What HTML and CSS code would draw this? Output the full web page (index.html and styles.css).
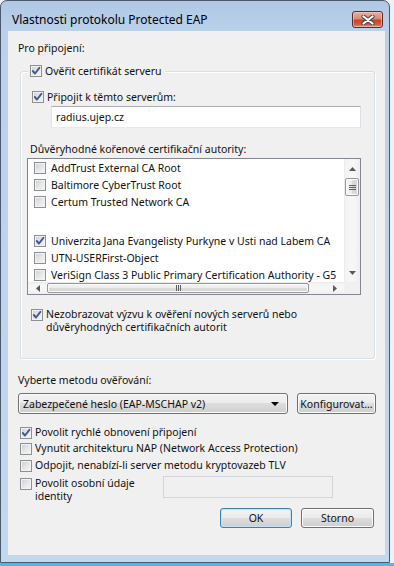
FILE: index.html
```html
<!DOCTYPE html>
<html lang="cs">
<head>
<meta charset="utf-8">
<title>Vlastnosti protokolu Protected EAP</title>
<link rel="stylesheet" href="styles.css">
</head>
<body>
<div class="window">
  <div class="titlebar">
    <span class="title">Vlastnosti protokolu Protected EAP</span>
    <span class="close"><svg width="14" height="10" viewBox="0 0 14 10"><path d="M2.5 1.5 L11.5 8.5 M11.5 1.5 L2.5 8.5" stroke="#4a4a4a" stroke-width="4.2" stroke-linecap="round" fill="none"/><path d="M2.5 1.5 L11.5 8.5 M11.5 1.5 L2.5 8.5" stroke="#ffffff" stroke-width="2.2" stroke-linecap="round" fill="none"/></svg></span>
  </div>
  <div class="client">
    <div class="lbl top">Pro připojení:</div>
    <div class="group">
      <div class="legend"><span class="cb on"><svg viewBox="0 0 10 10"><path d="M1.8 5 L4 7.5 L8.4 1.8" /></svg></span><span>Ověřit certifikát serveru</span></div>
      <div class="row connect"><span class="cb on"><svg viewBox="0 0 10 10"><path d="M1.8 5 L4 7.5 L8.4 1.8" /></svg></span><span>Připojit k těmto serverům:</span></div>
      <div class="edit">radius.ujep.cz</div>
      <div class="lbl ca">Důvěryhodné kořenové certifikační autority:</div>
      <div class="listbox">
        <div class="items">
          <div class="item"><span class="cb"></span><span>AddTrust External CA Root</span></div>
          <div class="item"><span class="cb"></span><span>Baltimore CyberTrust Root</span></div>
          <div class="item"><span class="cb"></span><span>Certum Trusted Network CA</span></div>
          <div class="spacer"></div>
          <div class="item"><span class="cb on"><svg viewBox="0 0 10 10"><path d="M1.8 5 L4 7.5 L8.4 1.8" /></svg></span><span>Univerzita Jana Evangelisty Purkyne v Usti nad Labem CA</span></div>
          <div class="item"><span class="cb"></span><span>UTN-USERFirst-Object</span></div>
          <div class="item"><span class="cb"></span><span>VeriSign Class 3 Public Primary Certification Authority - G5</span></div>
        </div>
        <div class="vscroll">
          <div class="sarrow"><svg width="7" height="4" viewBox="0 0 7 4"><path d="M0 4 L3.5 0 L7 4 Z" fill="#5a5a5a"/></svg></div>
          <div class="vthumb"><svg width="7" height="5" viewBox="0 0 7 5"><path d="M0 0.5 H7 M0 2.5 H7 M0 4.5 H7" stroke="#5e5e5e" stroke-width="1"/></svg></div>
          <div class="sfill"></div>
          <div class="sarrow"><svg width="7" height="4" viewBox="0 0 7 4"><path d="M0 0 L3.5 4 L7 0 Z" fill="#5a5a5a"/></svg></div>
        </div>
        <div class="hscroll">
          <div class="harrow"><svg width="4" height="7" viewBox="0 0 4 7"><path d="M4 0 L0 3.5 L4 7 Z" fill="#5a5a5a"/></svg></div>
          <div class="hthumb"><svg width="5" height="6" viewBox="0 0 5 6"><path d="M0.5 0 V6 M2.5 0 V6 M4.5 0 V6" stroke="#5e5e5e" stroke-width="1"/></svg></div>
          <div class="sfill"></div>
          <div class="harrow"><svg width="4" height="7" viewBox="0 0 4 7"><path d="M0 0 L4 3.5 L0 7 Z" fill="#5a5a5a"/></svg></div>
        </div>
        <div class="corner"></div>
      </div>
      <div class="row prompt"><span class="cb on"><svg viewBox="0 0 10 10"><path d="M1.8 5 L4 7.5 L8.4 1.8" /></svg></span><span>Nezobrazovat výzvu k ověření nových serverů nebo<br>důvěryhodných certifikačních autorit</span></div>
    </div>
    <div class="lbl method">Vyberte metodu ověřování:</div>
    <div class="combo-row">
      <div class="combo"><span>Zabezpečené heslo (EAP-MSCHAP v2)</span><svg width="8" height="4" viewBox="0 0 8 4"><path d="M0 0 H8 L4 4 Z" fill="#000"/></svg></div>
      <div class="btn konf">Konfigurovat...</div>
    </div>
    <div class="opt o1"><span class="cb on"><svg viewBox="0 0 10 10"><path d="M1.8 5 L4 7.5 L8.4 1.8" /></svg></span><span>Povolit rychlé obnovení připojení</span></div>
    <div class="opt o2"><span class="cb"></span><span>Vynutit architekturu NAP (Network Access Protection)</span></div>
    <div class="opt o3"><span class="cb"></span><span>Odpojit, nenabízí-li server metodu kryptovazeb TLV</span></div>
    <div class="opt o4"><span class="cb"></span><span class="idlabel">Povolit osobní údaje<br>identity</span><div class="field"></div></div>
    <div class="buttons">
      <div class="btn ok">OK</div>
      <div class="btn storno">Storno</div>
    </div>
  </div>
</div>
</body>
</html>
```

FILE: styles.css
```css
* { box-sizing: border-box; }
html, body { margin: 0; padding: 0; }
body {
  width: 394px;
  height: 566px;
  overflow: hidden;
  background: linear-gradient(to bottom, #eef1f4 0, #eef1f4 563px, #36c4ee 563px);
  font-family: "Noto Sans", "Open Sans", sans-serif;
  font-size: 10.5px;
  color: #111;
}
.window {
  width: 390px;
  height: 563px;
  border: 1px solid #4a5a6c;
  border-radius: 7px 7px 0 0;
  background: linear-gradient(to bottom, #b0c8e4 0, #bad1ea 30px, #c2d8ef 100%);
  padding: 0 4px 7px 7px;
  display: flex;
  flex-direction: column;
}
.titlebar {
  height: 30px;
  flex: none;
  display: flex;
  align-items: flex-start;
  padding: 10px 2px 0 4px;
}
.title {
  flex: 1;
  font-size: 12px;
  line-height: 17px;
  color: #000;
}
.close {
  width: 31px;
  height: 17px;
  border: 1px solid #5c2a22;
  border-radius: 3px;
  background: linear-gradient(to bottom, #eab1a2 0, #d98a74 45%, #c2442b 55%, #cf5f45 85%, #e29a80 100%);
  box-shadow: inset 0 0 0 1px rgba(255, 210, 200, 0.55);
  display: flex;
  align-items: center;
  justify-content: center;
}
.close svg { display: block; }
.client {
  flex: 1;
  background: #f0f0f0;
  padding-left: 10px;
  display: flex;
  flex-direction: column;
}
.lbl { height: 14px; line-height: 14px; white-space: nowrap; }
.lbl.top { margin-top: 10px; }

.cb {
  flex: none;
  width: 12px;
  height: 12px;
  border: 1px solid #8e8f8f;
  background: linear-gradient(135deg, #c9cdd3 0%, #e4e6e9 50%, #f6f6f6 100%);
  box-shadow: inset 0 0 0 1px #f2f2f2;
  display: flex;
  align-items: center;
  justify-content: center;
}
.cb svg { width: 10px; height: 10px; display: block; }
.cb svg path { fill: none; stroke: #44598f; stroke-width: 1.9; stroke-linecap: round; stroke-linejoin: round; }

.group {
  margin: 16px 10px 0 2px;
  height: 288px;
  border: 1px solid #d5dfe5;
  border-radius: 3px;
  box-shadow: inset 1px 1px 0 #fff, 1px 1px 0 #fff;
  display: flex;
  flex-direction: column;
}
.legend {
  display: flex;
  align-items: center;
  gap: 3px;
  width: max-content;
  height: 14px;
  line-height: 14px;
  margin: -8px 0 0 7px;
  padding: 0 3px 0 2px;
  background: #f0f0f0;
}
.row {
  display: flex;
  gap: 3px;
  line-height: 13px;
}
.row.connect { margin-top: 12px; padding-left: 11px; height: 14px; align-items: center; line-height: 14px; }
.edit {
  margin: 2px 0 0 30px;
  width: 310px;
  height: 22px;
  background: #fff;
  border: 1px solid #e3e9ef;
  border-top-color: #abadb3;
  border-left-color: #e2e3ea;
  border-right-color: #dbdfe6;
  padding-left: 4px;
  line-height: 20px;
}
.lbl.ca { margin-top: 14px; padding-left: 9px; }
.listbox {
  margin: 2px 0 0 6px;
  width: 334px;
  height: 137px;
  border: 1px solid #828790;
  background: #fff;
  display: grid;
  grid-template-columns: 316px 16px;
  grid-template-rows: 123px 12px;
}
.items { overflow: hidden; }
.item {
  height: 17px;
  display: flex;
  align-items: center;
  gap: 5px;
  padding-left: 6px;
  white-space: nowrap;
}
.spacer { height: 22px; }
.vscroll {
  display: flex;
  flex-direction: column;
  background: linear-gradient(to right, #e4e4e4 0, #f3f3f3 1px, #f7f7f7 60%, #eeeeee 100%);
}
.sarrow { height: 19px; flex: none; display: flex; align-items: center; justify-content: center; }
.sarrow svg, .harrow svg { display: block; }
.sfill { flex: 1; }
.vthumb {
  height: 18px;
  flex: none;
  margin: 0 1px;
  border: 1px solid #979797;
  border-radius: 2px;
  background: linear-gradient(to right, #f4f4f4 0, #ececec 50%, #dcdcdc 50%, #d4d4d4 100%);
  box-shadow: inset 0 0 0 1px #fbfbfb;
  display: flex;
  align-items: center;
  justify-content: center;
}
.hscroll {
  display: flex;
  background: linear-gradient(to bottom, #e4e4e4 0, #f3f3f3 1px, #f7f7f7 60%, #eeeeee 100%);
}
.harrow { width: 19px; flex: none; display: flex; align-items: center; justify-content: center; }
.hthumb {
  width: 262px;
  flex: none;
  margin: 1px 0;
  border: 1px solid #979797;
  border-radius: 2px;
  background: linear-gradient(to bottom, #f4f4f4 0, #ececec 50%, #dcdcdc 50%, #d4d4d4 100%);
  box-shadow: inset 0 0 0 1px #fbfbfb;
  display: flex;
  align-items: center;
  justify-content: center;
}
.corner { background: #f0f0f0; }
.row.prompt { margin-top: 13px; padding-left: 10px; align-items: flex-start; }
.row.prompt .cb, .opt .cb { margin-top: 1px; }

.lbl.method { margin-top: 14px; }
.combo-row {
  margin-top: 6px;
  height: 21px;
  display: flex;
  gap: 9px;
}
.combo, .btn {
  border: 1px solid #707070;
  border-radius: 3px;
  background: linear-gradient(to bottom, #f2f2f2 0, #ebebeb 50%, #dddddd 50%, #cfcfcf 100%);
  box-shadow: inset 0 0 0 1px #fcfcfc;
  white-space: nowrap;
}
.combo {
  width: 270px;
  display: flex;
  align-items: center;
  padding: 0 8px 0 4px;
}
.combo span { flex: 1; }
.btn {
  display: flex;
  align-items: center;
  justify-content: center;
}
.btn.konf { width: 79px; }
.opt {
  display: flex;
  gap: 3px;
  line-height: 13px;
  height: 13px;
  padding-left: 2px;
  white-space: nowrap;
}
.opt.o1 { margin-top: 12px; }
.opt.o2 { margin-top: 3px; }
.opt.o3 { margin-top: 4px; }
.opt.o4 { margin-top: 5px; height: 26px; }
.idlabel { width: 125px; flex: none; }
.field {
  margin-top: -1px;
  width: 170px;
  height: 22px;
  border: 1px solid #d3d6da;
  background: #f0f0f0;
}
.buttons {
  margin-top: 5px;
  height: 20px;
  display: flex;
  justify-content: flex-end;
  gap: 9px;
  padding-right: 11px;
}
.btn.ok {
  width: 72px;
  border-color: #3c7fb1;
  box-shadow: inset 0 0 0 1px #bfe3f8;
}
.btn.storno { width: 73px; }
```
